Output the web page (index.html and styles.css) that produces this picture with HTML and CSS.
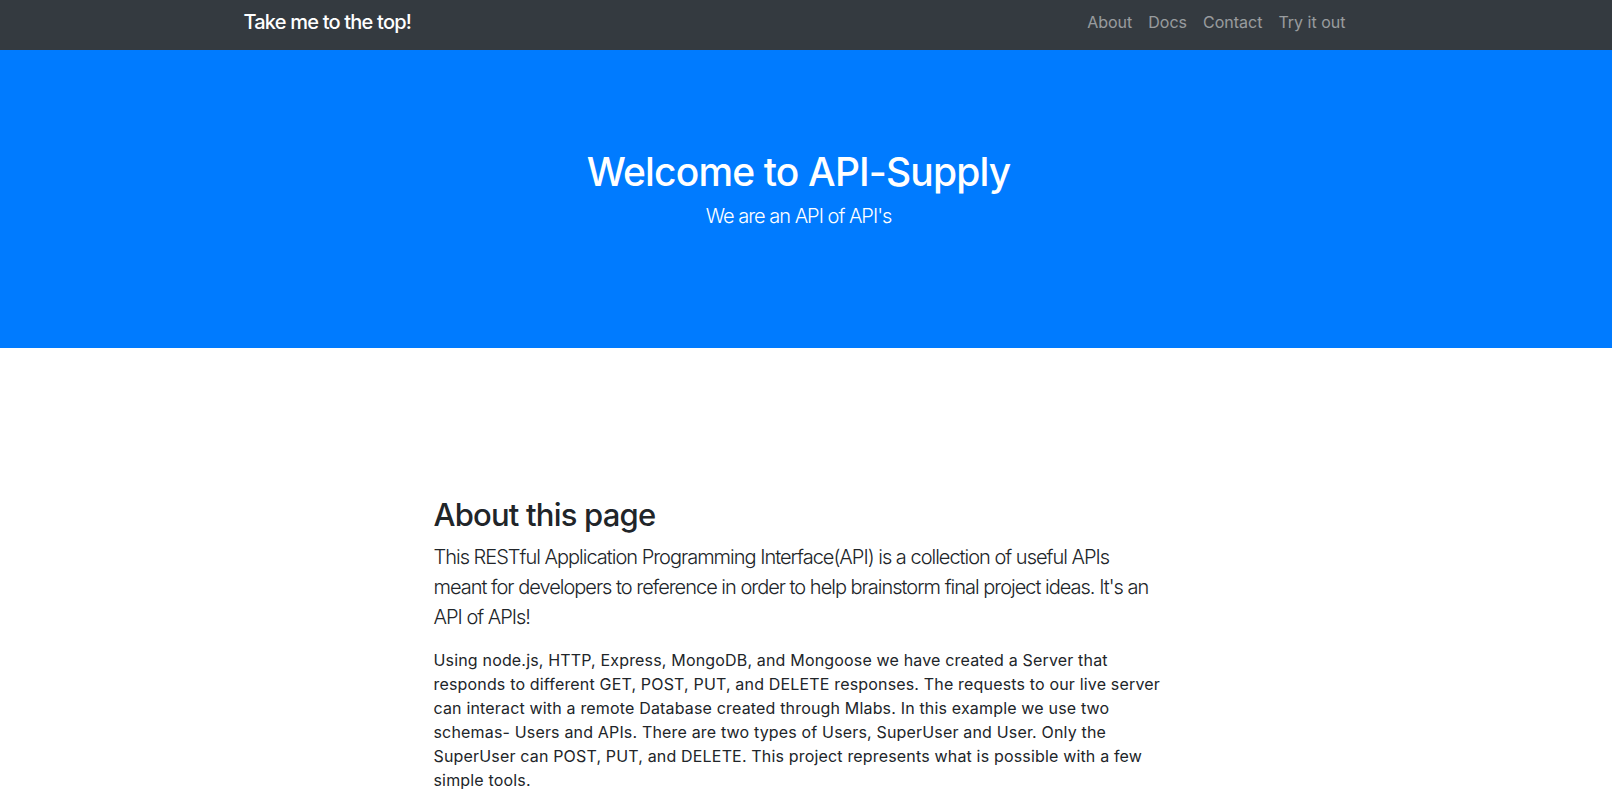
FILE: index.html
```html
<!DOCTYPE html>
<html lang="en">
<head>
<meta charset="utf-8">
<title>API-Supply</title>
<link rel="stylesheet" href="styles.css">
</head>
<body>
<nav class="navbar">
  <div class="container navbar-inner">
    <a class="brand" href="#">Take me to the top!</a>
    <ul class="nav-links">
      <li><a href="#">About</a></li>
      <li><a href="#">Docs</a></li>
      <li><a href="#">Contact</a></li>
      <li><a href="#">Try it out</a></li>
    </ul>
  </div>
</nav>
<header class="hero">
  <h1 class="hero-title">Welcome to API-Supply</h1>
  <p class="hero-sub">We are an API of API's</p>
</header>
<section class="about">
  <div class="container">
    <div class="about-col">
      <h2 class="about-title">About this page</h2>
      <p class="lead">This RESTful Application Programming Interface(API) is a collection of useful APIs meant for developers to reference in order to help brainstorm final project ideas. It's an API of APIs!</p>
      <p class="body-text">Using node.js, HTTP, Express, MongoDB, and Mongoose we have created a Server that responds to different GET, POST, PUT, and DELETE responses. The requests to our live server can interact with a remote Database created through Mlabs. In this example we use two schemas- Users and APIs. There are two types of Users, SuperUser and User. Only the SuperUser can POST, PUT, and DELETE. This project represents what is possible with a few simple tools.</p>
    </div>
  </div>
</section>
</body>
</html>
```
FILE: styles.css
```css
* { box-sizing: border-box; }
html, body { margin: 0; padding: 0; }
body {
  font-family: Inter, "Noto Sans", "Liberation Sans", sans-serif;
  font-size: 16px;
  line-height: 1.5;
  color: #212529;
  background: #fff;
}
.container {
  width: 1140px;
  margin-left: calc((100% - 15px - 1140px) / 2);
  padding: 0 15px;
}
.navbar {
  background: #343a40;
  height: 50px;
}
.navbar-inner {
  height: 50px;
  display: flex;
  align-items: flex-start;
  justify-content: space-between;
}
.brand {
  margin-top: 7px;
  color: #fff;
  text-decoration: none;
  font-size: 20px;
  font-weight: 500;
  line-height: 30px;
  letter-spacing: -0.8px;
}
.nav-links {
  list-style: none;
  margin: 0;
  padding: 2px 0 0;
  display: flex;
}
.nav-links a {
  display: block;
  padding: 8px 8px;
  color: rgba(255,255,255,.5);
  text-decoration: none;
  font-size: 16px;
  line-height: 24px;
}
.hero {
  background: #007bff;
  color: #fff;
  text-align: center;
  height: 298px;
  padding-top: 98px;
  padding-right: 15px;
}
.hero-title {
  margin: 0 0 5px;
  font-size: 39px;
  line-height: 48px;
  font-weight: 500;
  letter-spacing: -0.85px;
}
.hero-sub {
  margin: 0;
  font-size: 20px;
  line-height: 30px;
  font-weight: 300;
  letter-spacing: -1px;
}
.about {
  padding-top: 148px;
}
.about-col {
  margin-left: 175px;
  width: 760px;
  padding: 0 15px;
}
.about-title {
  margin: 0 0 8px;
  font-size: 31px;
  line-height: 38px;
  font-weight: 500;
  letter-spacing: -0.8px;
}
.lead {
  margin: 0 0 16px;
  font-size: 20px;
  line-height: 30px;
  font-weight: 300;
  letter-spacing: -1px;
}
.body-text {
  margin: 0;
  font-size: 16px;
  line-height: 24px;
  letter-spacing: 0.17px;
}
```
